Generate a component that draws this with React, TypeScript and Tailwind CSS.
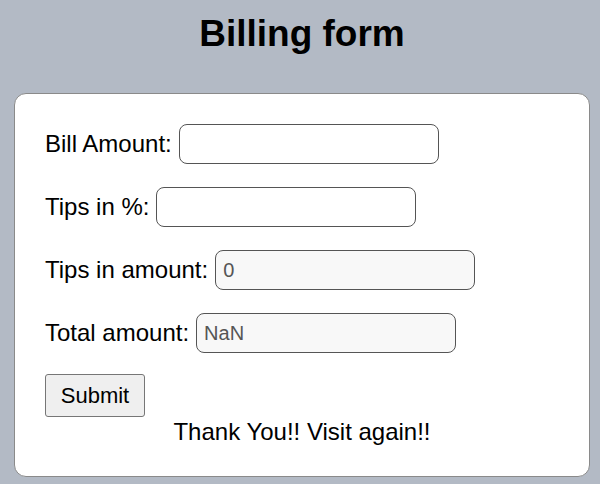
import React, { useState } from 'react';

const font = { fontFamily: '"Liberation Sans", Arial, sans-serif' };

const App: React.FC = () => {
  const [bill, setBill] = useState('');
  const [tips, setTips] = useState('');

  const tipAmount = bill === '' && tips === '' ? 0 : (parseFloat(bill) * parseFloat(tips)) / 100;
  const total = parseFloat(bill) + tipAmount;

  return (
    <div className="min-h-[484px] bg-[#b3bac5] pt-[13px] pb-[8px] text-black" style={font}>
      {/* Title */}
      <h1 className="ml-[14px] w-[576px] text-center text-[37px] font-bold leading-[42px]">
        Billing form
      </h1>

      {/* Form card */}
      <div className="ml-[14px] mt-[38px] w-[576px] rounded-[12px] border border-[#8a8a8a] bg-white px-[30px] pt-[30px] pb-[29px]">
        <div className="flex flex-col gap-[23px]">
          <div className="flex items-center">
            <label className="mr-[7px] text-[24px] leading-[28px]">Bill Amount:</label>
            <input
              type="number"
              value={bill}
              onChange={(e) => setBill(e.target.value)}
              className="h-[40px] w-[260px] rounded-[8px] border border-[#555] bg-white px-[7px] text-[20px] outline-none"
            />
          </div>

          <div className="flex items-center">
            <label className="mr-[7px] text-[24px] leading-[28px]">Tips in %:</label>
            <input
              type="number"
              value={tips}
              onChange={(e) => setTips(e.target.value)}
              className="h-[40px] w-[260px] rounded-[8px] border border-[#555] bg-white px-[7px] text-[20px] outline-none"
            />
          </div>

          <div className="flex items-center">
            <label className="mr-[7px] text-[24px] leading-[28px]">Tips in amount:</label>
            <input
              type="text"
              readOnly
              value={String(tipAmount)}
              className="h-[40px] w-[260px] rounded-[8px] border border-[#555] bg-[#f8f8f8] px-[7px] text-[20px] text-[#555] outline-none"
            />
          </div>

          <div className="flex items-center">
            <label className="mr-[7px] text-[24px] leading-[28px]">Total amount:</label>
            <input
              type="text"
              readOnly
              value={String(total)}
              className="h-[40px] w-[260px] rounded-[8px] border border-[#555] bg-[#f8f8f8] px-[7px] text-[20px] text-[#555] outline-none"
            />
          </div>
        </div>

        <button
          type="button"
          className="mt-[21px] h-[43px] w-[100px] rounded-[3px] border border-[#767676] bg-[#efefef] text-[22px] leading-[26px] text-black"
        >
          Submit
        </button>

        <div className="text-center text-[24px] leading-[30px]">Thank You!! Visit again!!</div>
      </div>
    </div>
  );
};

export default App;
